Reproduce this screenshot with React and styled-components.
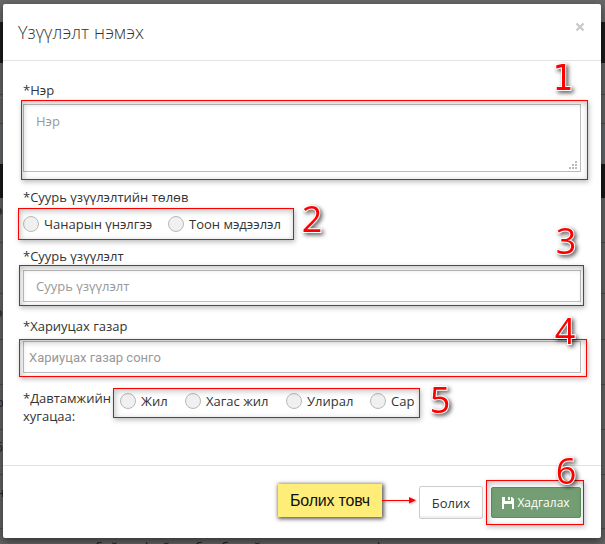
import React from "react";
import styled, { createGlobalStyle } from "styled-components";

const Global = createGlobalStyle`
  * { box-sizing: border-box; }
  html, body { margin: 0; height: 544px; overflow: hidden; }
  body { font: 13px/18px "Open Sans", "Noto Sans", sans-serif; color: #333; }
`;

const Page = styled.div`
  position: relative;
  width: 605px;
  height: 544px;
  padding: 4px 4px 6px 3px;
  overflow: hidden;
  background: #636363;
`;
const Backdrop = styled.div`
  position: absolute;
  inset: 0;
  display: flex;
  flex-direction: column;
`;
const Band = styled.div`
  height: ${(p) => p.$h}px;
  flex: none;
  padding-top: ${(p) => p.$top || 0}px;
  background: ${(p) => p.$bg || "#646464"};
  border-bottom: ${(p) => (p.$line ? "1px solid #4c4c4c" : "0")};
  color: ${(p) => p.$color || "#20242c"};
  display: flex;
  align-items: ${(p) => (p.$top ? "flex-start" : "center")};
  white-space: nowrap;
`;
const Clipped = styled.span`
  margin-left: ${(p) => p.$x}px;
`;
const BottomRow = styled.div`
  display: grid;
  grid-template-columns: 95px 47px 53px 26px 32px 121px 1fr;
  height: 14px;
  padding-top: 9px;
  line-height: 18px;
  color: #161616;
`;
const Modal = styled.form`
  position: relative;
  height: 534px;
  width: 598px;
  display: flex;
  flex-direction: column;
  background: #fff;
  border-radius: 2px;
  box-shadow: 0 3px 9px rgba(0, 0, 0, 0.5);
`;
const Header = styled.header`
  height: 57px;
  flex: none;
  padding: 16px 15px 0;
  display: flex;
  justify-content: space-between;
  border-bottom: 1px solid #e2e2e2;
`;
const Title = styled.h4`
  margin: 0;
  font-size: 18px;
  line-height: 24px;
  font-weight: 300;
  letter-spacing: 0.06px;
`;
const Close = styled.button`
  width: 12px;
  height: 14px;
  padding: 0;
  border: 0;
  background: none;
  display: flex;
  align-items: center;
  justify-content: center;
`;
const Body = styled.main`
  height: 404px;
  flex: none;
  padding: 20px;
`;
const Label = styled.label`
  display: block;
  height: 18px;
  margin-top: ${(p) => p.$top || 0}px;
`;
const Area = styled.textarea`
  display: block;
  width: 558px;
  height: 68px;
  margin-top: 5px;
  padding: 7px 12px;
  border: 1px solid #bdbdbd;
  outline: 0;
  resize: none;
  font: inherit;
  background: #fff;
  &::placeholder { color: #999; opacity: 1; }
`;
const Field = styled.input`
  display: block;
  width: 558px;
  height: 32px;
  margin-top: ${(p) => p.$top}px;
  padding: 0 ${(p) => p.$pad}px;
  border: 1px solid #bdbdbd;
  outline: 0;
  font: 13px ${(p) => p.$font || '"Open Sans"'}, sans-serif;
  &::placeholder { color: #999; opacity: 1; }
`;
const RadioRow = styled.div`
  height: 18px;
  margin-top: ${(p) => p.$top || 0}px;
  display: grid;
  grid-template-columns: ${(p) => p.$cols};
`;
const Choice = styled.label`
  display: flex;
  align-items: center;
  gap: 5px;
  white-space: nowrap;
`;
const Dot = styled.span`
  width: 16px;
  height: 16px;
  flex: none;
  border: 1px solid #b9b9b9;
  border-radius: 50%;
  background: #f0f0f0;
`;
const Frequency = styled.div`
  display: grid;
  grid-template-columns: 97px 1fr;
  margin-top: 16px;
`;
const Footer = styled.footer`
  flex: 1;
  display: flex;
  justify-content: flex-end;
  align-items: flex-start;
  gap: 8px;
  padding: 20px 20px 0 0;
  border-top: 1px solid #e2e2e2;
`;
const Button = styled.button`
  height: ${(p) => (p.$primary ? 31 : 33)}px;
  width: ${(p) => (p.$primary ? 90 : 64)}px;
  margin: ${(p) => (p.$primary ? "1px 0 0" : "0")};
  padding: 0;
  display: flex;
  align-items: center;
  justify-content: center;
  gap: 3px;
  border: 1px solid ${(p) => (p.$primary ? "#5d8e5d" : "#ccc")};
  border-radius: 2px;
  background: ${(p) => (p.$primary ? "#739e73" : "#fff")};
  box-shadow: ${(p) => (p.$primary ? "none" : "inset 0 -2px 0 #f0f0f0")};
  color: ${(p) => (p.$primary ? "#fff" : "#333")};
  font: ${(p) => (p.$primary ? "12px" : "13px")} "Open Sans", sans-serif;
`;
const Highlight = styled.div`
  position: absolute;
  left: ${(p) => p.$x}px;
  top: ${(p) => p.$y}px;
  width: ${(p) => p.$w}px;
  height: ${(p) => p.$h}px;
  border: 1px solid #f00;
  pointer-events: none;
  box-shadow: 1px 2px 5px rgba(0, 0, 0, 0.27), inset 1px 2px 6px rgba(0, 0, 0, 0.25);
`;
const Marker = styled.div`
  position: absolute;
  left: ${(p) => p.$x}px;
  top: ${(p) => p.$y}px;
  width: 24px;
  text-align: center;
  font: ${(p) => (p.$footed ? '36px/40px "DejaVu Sans Condensed", "DejaVu Sans"' : '36px/40px "Open Sans"')}, sans-serif;
  font-stretch: ${(p) => (p.$footed ? "condensed" : "normal")};
  color: #f00;
  -webkit-text-stroke: 2px #fff;
  paint-order: stroke fill;
  filter: drop-shadow(2px 2px 2px rgba(0, 0, 0, 0.65));
`;
const Note = styled.div`
  position: absolute;
  left: 278px;
  top: 484px;
  width: 104px;
  height: 33px;
  display: flex;
  align-items: center;
  justify-content: center;
  background: #ffed7a;
  box-shadow: 1px 1px 4px 1px rgba(0, 0, 0, 0.65);
  color: #111;
  font: 16px "Liberation Sans", sans-serif;
  letter-spacing: -0.2px;
`;
const Arrow = styled.svg`
  position: absolute;
  left: 382px;
  top: 493px;
  filter: drop-shadow(1px 1px 1px rgba(0, 0, 0, 0.3));
`;
const Grip = styled.svg`
  position: absolute;
  left: 569px;
  top: 161px;
`;

const bands = [
  { h: 22, bg: "#686868" },
  { h: 41, bg: "#1b1b1b" },
  { h: 32, line: true },
  { h: 12, text: "Т", x: -6, color: "#b5700c" },
  { h: 17, line: true },
  { h: 40, bg: "#64676a" },
  { h: 34, bg: "#191919" },
  { h: 45, line: true, text: "э", x: -4, top: 3 },
  { h: 51, line: true },
  { h: 46, line: true, text: "э", x: -4, top: 9 },
  { h: 45, line: true },
  { h: 45, line: true, text: "о", x: -4, top: 8 },
  { h: 45, line: true, text: "б", x: -5, top: 8 },
  { h: 54, line: true, text: "н", x: -4, top: 8 },
];
const markers = [
  [1, 551, 58], [2, 300, 199], [3, 554, 221],
  [4, 553, 311], [5, 428, 380], [6, 554, 451],
];
const highlights = [
  [21, 100, 567, 80], [18, 208, 276, 32], [19, 265, 565, 41],
  [19, 339, 568, 38], [113, 388, 307, 30], [486, 480, 98, 45],
];
const gripDots = [[6, 0], [3, 3], [6, 3], [0, 6], [3, 6], [6, 6]];

function Radio({ children }) {
  return <Choice><Dot />{children}</Choice>;
}

export default function App() {
  return (
    <>
      <Global />
      <Page>
        <Backdrop>
          {bands.map((b, i) => (
            <Band key={i} $h={b.h} $bg={b.bg} $line={b.line} $color={b.color} $top={b.top}>
              {b.text && <Clipped $x={b.x}>{b.text}</Clipped>}
            </Band>
          ))}
          <BottomRow>
            <span />
            <span>бай</span>
            <span>ф ай</span>
            <span>б</span>
            <span>ба</span>
            <span>й</span>
            <span>ф</span>
          </BottomRow>
        </Backdrop>
        <Modal onSubmit={(e) => e.preventDefault()}>
          <Header>
            <Title>Үзүүлэлт нэмэх</Title>
            <Close type="button" aria-label="Хаах">
              <svg width="10" height="10" viewBox="0 0 10 10">
                <path d="M1.5 1.5 8.5 8.5M8.5 1.5 1.5 8.5" stroke="#c8c8c8" strokeWidth="2.2" />
              </svg>
            </Close>
          </Header>
          <Body>
            <Label>*Нэр</Label>
            <Area placeholder="Нэр" />
            <Label $top={16}>*Суурь үзүүлэлтийн төлөв</Label>
            <RadioRow $top={9} $cols="145px 1fr">
              <Radio>Чанарын үнэлгээ</Radio>
              <Radio>Тоон мэдээлэл</Radio>
            </RadioRow>
            <Label $top={14}>*Суурь үзүүлэлт</Label>
            <Field $top={5} $pad={12} placeholder="Суурь үзүүлэлт" />
            <Label $top={15}>*Хариуцах газар</Label>
            <Field $top={6} $pad={5} $font="Roboto" placeholder="Хариуцах газар сонго" />
            <Frequency>
              <span>*Давтамжийн хугацаа:</span>
              <RadioRow $top={3} $cols="65px 101px 84px 1fr">
                <Radio>Жил</Radio>
                <Radio>Хагас жил</Radio>
                <Radio>Улирал</Radio>
                <Radio>Сар</Radio>
              </RadioRow>
            </Frequency>
          </Body>
          <Footer>
            <Button type="button">Болих</Button>
            <Button $primary>
              <svg width="12" height="12" viewBox="0 0 12 12">
                <path fill="#fff" fillRule="evenodd" d="M0 0h3v4h6V0h1l2 2v10h-2V7H2v5H0zM6 0h2v3H6z" />
              </svg>
              Хадгалах
            </Button>
          </Footer>
        </Modal>
        <Grip width="9" height="9">
          {gripDots.map(([x, y]) => <rect key={`${x}-${y}`} x={x} y={y} width="2" height="2" fill="#bbb" />)}
        </Grip>
        {highlights.map(([x, y, w, h]) => <Highlight key={y} $x={x} $y={y} $w={w} $h={h} />)}
        <Note>Болих товч</Note>
        <Arrow width="36" height="14">
          <path d="M0 7.5H28" stroke="#f00" />
          <path d="M27 4 34 7.2 27 10.5z" fill="#f00" />
        </Arrow>
        {markers.map(([n, x, y]) => <Marker key={n} $x={x} $y={y} $footed={n === 1}>{n}</Marker>)}
      </Page>
    </>
  );
}
